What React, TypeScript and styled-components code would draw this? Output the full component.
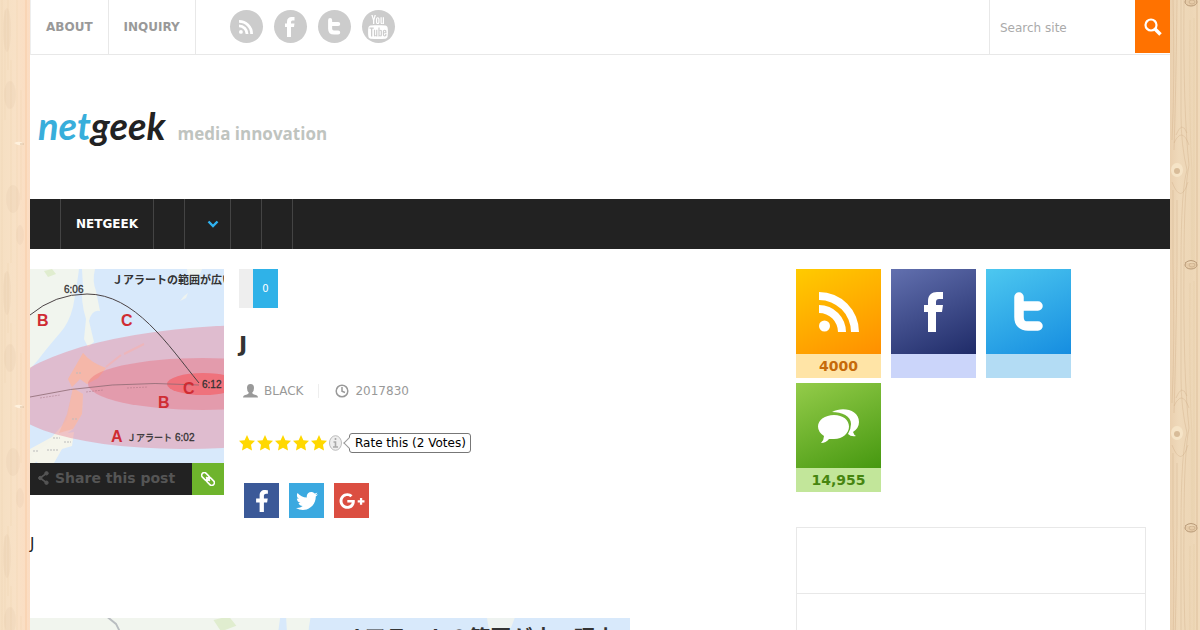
import React from "react";
import styled, { createGlobalStyle } from "styled-components";
import { FaFacebookF, FaGooglePlusG, FaTwitter } from "react-icons/fa";
import { TfiYoutube } from "react-icons/tfi";

const GlobalStyle = createGlobalStyle`
  *, *::before, *::after { box-sizing: border-box; }
  body {
    margin: 0;
    background: #fff;
    color: #222;
    font-family: "DejaVu Sans", "Noto Sans CJK JP", sans-serif;
    font-size: 12px;
  }
  a { color: inherit; text-decoration: none; }
  h1, p, ul { margin: 0; padding: 0; }
  svg { display: block; }
`;

const Shell = styled.div`
  display: grid;
  grid-template-columns: 30px minmax(0, 1fr) 30px;
  min-height: 100vh;
`;

const Page = styled.div`
  background: #fff;
  min-width: 0;
`;

const TopBar = styled.div`
  display: flex;
  height: 55px;
  border-bottom: 1px solid #e8e8e8;
  border-left: 1px solid #eee;
`;

const TopLink = styled.a`
  display: flex;
  align-items: center;
  padding: 0 15px;
  border-right: 1px solid #e8e8e8;
  color: #999;
  font-weight: bold;
`;

const Circles = styled.div`
  display: flex;
  gap: 11px;
  margin-left: 34px;
  padding-top: 10px;
`;

const Circle = styled.a`
  display: flex;
  align-items: center;
  justify-content: center;
  width: 33px;
  height: 33px;
  border-radius: 50%;
  background: #ccc;
  color: #fff;
`;

const Search = styled.form`
  display: flex;
  width: 181px;
  margin-left: auto;
  border-left: 1px solid #e8e8e8;
`;

const SearchInput = styled.input`
  flex: 1;
  min-width: 0;
  padding: 2px 10px 0;
  border: 0;
  outline: 0;
  background: transparent;
  font: 12px "DejaVu Sans", sans-serif;
  &::placeholder { color: #aaa; opacity: 1; }
`;

const SearchButton = styled.button`
  display: flex;
  align-items: center;
  justify-content: center;
  width: 35px;
  height: 53px;
  padding: 0;
  border: 0;
  background: #ff7200;
`;

const Header = styled.header`
  display: flex;
  align-items: baseline;
  gap: 12px;
  height: 144px;
  padding: 48px 0 0 8px;
`;

const Logo = styled.a`
  color: #222;
  font: italic bold 38px/44px Lato, sans-serif;
`;

const LogoAccent = styled.span`
  color: #38aedb;
`;

const Tagline = styled.span`
  color: #bfc4bf;
  font: bold 17px/24px "Open Sans", sans-serif;
`;

const Nav = styled.nav`
  display: flex;
  height: 50px;
  background: #222;
`;

const NavItem = styled.a<{ $menu?: boolean }>`
  display: flex;
  align-items: center;
  padding: 0 ${(p) => (p.$menu ? "11px 0 22px" : "15px")};
  border-right: 1px solid #444;
  color: #fff;
  font-weight: bold;
`;

const Columns = styled.div`
  display: flex;
  justify-content: space-between;
  padding: 20px 24px 0 0;
`;

const Article = styled.main`
  width: 600px;
`;

const Intro = styled.div`
  display: flex;
  gap: 15px;
`;

const ThumbBlock = styled.div`
  width: 194px;
`;

const ShareBar = styled.div`
  display: flex;
  height: 32px;
  background: #222;
`;

const ShareLabel = styled.span`
  display: flex;
  flex: 1;
  align-items: center;
  gap: 6px;
  padding: 0 0 2px 8px;
  color: #555;
  font-size: 14px;
  font-weight: bold;
`;

const ShareLink = styled.a`
  display: flex;
  align-items: center;
  justify-content: center;
  width: 32px;
  background: #6eb42c;
  color: #fff;
`;

const Details = styled.div`
  display: flex;
  flex-direction: column;
  align-items: flex-start;
`;

const Count = styled.span`
  width: 39px;
  border-left: 14px solid #eee;
  background: #2fb2e8;
  color: #fff;
  font-size: 10px;
  line-height: 39px;
  text-align: center;
`;

const Title = styled.h1`
  margin-top: 22px;
  color: #333;
  font-size: 22px;
  line-height: 30px;
`;

const Meta = styled.div`
  display: flex;
  align-items: center;
  height: 16px;
  margin-top: 23px;
  padding-left: 4px;
  color: #999;
`;

const MetaItem = styled.span`
  display: flex;
  align-items: center;
  gap: 6px;
  & + & {
    margin-left: 15px;
    padding-left: 16px;
    border-left: 1px solid #eee;
  }
`;

const Rating = styled.div`
  display: flex;
  align-items: center;
  height: 20px;
  margin-top: 34px;
`;

const Bubble = styled.span`
  position: relative;
  margin-left: 7px;
  padding: 0 4px 0 5px;
  border: 1px solid #777;
  border-radius: 3px;
  color: #000;
  line-height: 18px;
  &::before {
    content: "";
    position: absolute;
    top: 5px;
    left: -5px;
    width: 8px;
    height: 8px;
    border: solid #999;
    border-width: 0 0 1px 1px;
    background: #fff;
    transform: rotate(45deg);
  }
`;

const ShareButtons = styled.div`
  display: flex;
  gap: 10px;
  margin-top: 30px;
  padding-left: 5px;
`;

const ShareButton = styled.a<{ $color: string }>`
  display: flex;
  align-items: center;
  justify-content: center;
  width: 35px;
  height: 35px;
  background: ${(p) => p.$color};
  color: #fff;
`;

const Paragraph = styled.p`
  margin: 14px 0 62px;
  font-size: 15px;
  line-height: 24px;
`;

const Sidebar = styled.aside`
  width: 350px;
`;

const Tiles = styled.div`
  display: flex;
  flex-wrap: wrap;
  gap: 5px 10px;
`;

const Tile = styled.a<{ $from: string; $to: string }>`
  display: flex;
  align-items: center;
  justify-content: center;
  width: 85px;
  height: 85px;
  background: linear-gradient(155deg, ${(p) => p.$from}, ${(p) => p.$to});
`;

const TileCount = styled.div<{ $bg: string; $fg: string }>`
  height: 24px;
  background: ${(p) => p.$bg};
  color: ${(p) => p.$fg};
  font-size: 14px;
  font-weight: bold;
  line-height: 24px;
  text-align: center;
`;

const Widget = styled.section`
  margin-top: 35px;
  border: 1px solid #e8e8e8;
`;

const WidgetHead = styled.div`
  height: 66px;
  border-bottom: 1px solid #e8e8e8;
`;

const WidgetBody = styled.div`
  height: 200px;
`;

function LeftWood() {
  return (
    <svg width="30" height="100%" aria-hidden="true">
      <defs>
        <linearGradient id="lw">
          <stop offset="0" stopColor="#f5dfc2" />
          <stop offset=".5" stopColor="#f8e1c6" />
          <stop offset=".85" stopColor="#fbdec3" />
          <stop offset="1" stopColor="#fcdcc2" />
        </linearGradient>
        <pattern id="lp" width="30" height="263" patternUnits="userSpaceOnUse">
          <rect width="30" height="263" fill="url(#lw)" />
          <g fill="none" stroke="#e6c39c" strokeOpacity=".25">
            <path d="M2 0V263M5 10V120M8 0V70M11 60V263M17 0V263M21 90V200" />
            <path d="M26 0V263" stroke="#f3b98c" strokeOpacity=".5" />
          </g>
          <g fill="#cdb48f" fillOpacity=".13">
            <ellipse cx="7" cy="30" rx="4" ry="22" />
            <ellipse cx="13" cy="199" rx="7" ry="14" />
            <ellipse cx="20" cy="235" rx="4" ry="10" />
            <ellipse cx="10" cy="95" rx="6" ry="14" />
          </g>
          <path d="M14 143Q20 140 24 144Q20 147 14 143" fill="#fff1dd" />
          <path d="M20 144H24" stroke="#c39b73" strokeOpacity=".6" />
        </pattern>
      </defs>
      <rect width="30" height="100%" fill="url(#lp)" />
    </svg>
  );
}

function RightWood() {
  return (
    <svg width="30" height="100%" aria-hidden="true">
      <defs>
        <linearGradient id="rw">
          <stop offset="0" stopColor="#ead0af" />
          <stop offset=".3" stopColor="#efd9ba" />
          <stop offset=".7" stopColor="#edd6b6" />
          <stop offset="1" stopColor="#f1dabb" />
        </linearGradient>
        <pattern id="rp" width="30" height="263" patternUnits="userSpaceOnUse">
          <rect width="30" height="263" fill="url(#rw)" />
          <g fill="none" stroke="#c9a47b" strokeOpacity=".3">
            <path d="M3 0Q5 80 2 140M7 0Q6 90 4 150M11 0V115Q11 145 17 170Q11 190 11 263M14 0Q13 110 19 165Q14 190 14 263M3 190V263M7 200V263" />
            <path d="M20 20Q19 130 22 170V263M24 18V263" strokeOpacity=".15" />
            <path d="M27 0V263" stroke="#c09a70" strokeOpacity=".4" />
            <path d="M6 135Q12 120 17 133M4 143Q12 126 19 145M2 182Q11 205 18 182" />
          </g>
          <ellipse cx="7" cy="170" rx="6" ry="7" fill="#f7e7cb" fillOpacity=".8" />
          <ellipse cx="7" cy="171" rx="3" ry="3" fill="#c5a27a" fillOpacity=".6" />
          <g fill="#e6cba8" stroke="#b89976">
            <ellipse cx="21" cy="2" rx="6" ry="4" />
            <ellipse cx="22" cy="2" rx="3" ry="2" strokeOpacity=".5" />
            <path d="M15 263Q21 258 27 263" fill="none" />
          </g>
        </pattern>
      </defs>
      <rect width="30" height="100%" fill="url(#rp)" />
    </svg>
  );
}

function AlertMap({ width, height, viewBox }: { width: number; height: number; viewBox: string }) {
  return (
    <svg width={width} height={height} viewBox={viewBox} role="img" aria-label="Jアラートの範囲">
      <rect x="-90" width="340" height="194" fill="#d8e9fb" />
      <path d="M-90 0H49Q47 16 43 38Q39 54 30 64Q17 79 8 91L0 100L-90 130Z" fill="#f1f5ee" />
      <path d="M-42 0L-37 4L-33 12" fill="none" stroke="#b9bdc0" />
      <path d="M14 2L22 0L26 5L18 8Z" fill="#e0edcf" />
      <path d="M52 0H65Q62 12 66 22L70 42Q62 40 59 52L64 73L58 78L54 70L56 50Q50 30 53 18Z" fill="#f1f5ee" />
      <path d="M157 0H172L169 8L165 12L158 6ZM150 32L154 27L158 24L156 29Z" fill="#eef3f0" />
      <path d="M45 98L53 84Q61 94 76 99L68 109L57 115L50 110L42 118L38 110Z" fill="#f6e6d2" />
      <path d="M43 119L53 125L52 145L43 160L34 167L24 175L13 182L5 194H-6L0 180L22 168L37 151Z" fill="#f4f4ea" />
      <path d="M27 166L44 163L42 177L32 180L24 194H8L0 188L14 177Z" fill="#f5f5eb" />
      <path d="M76 98L91 86M94 85L114 75" stroke="#f1dcd8" strokeWidth="2" />
      <ellipse cx="190" cy="118" rx="215" ry="61" fill="#e88295" fillOpacity=".43" transform="rotate(-3 190 118)" />
      <path d="M45 98L53 84Q61 94 76 99L68 109L57 115L50 110L42 118L38 110ZM43 119L53 125L52 145L43 160L29 164L37 145Z" fill="#f6b5a2" fillOpacity=".7" />
      <ellipse cx="173" cy="115" rx="115" ry="26" fill="#eb6270" fillOpacity=".36" />
      <ellipse cx="173" cy="115" rx="36" ry="11" fill="#ff3a3a" fillOpacity=".42" />
      <path d="M-70 150L0 128Q80 110 169 116" fill="none" stroke="#8d6972" strokeWidth=".8" />
      <path d="M-70 140Q-35 76 0 46Q25 25 57 25C105 25 138 76 169 114" fill="none" stroke="#4b4345" />
      <path d="M10 129L30 126M56 123L73 121M97 119L118 118" stroke="#9b6875" strokeOpacity=".4" strokeDasharray="2 1" />
      <path d="M46 104h5M42 150h5M23 169h7M34 173h7M3 182h6M17 181h11" stroke="#bbb" strokeDasharray="2 1" />
      <g fontFamily="Liberation Sans, Noto Sans CJK JP, sans-serif" fill="#333">
        <text x="82" y="15" fontSize="11" fontWeight="bold" fontFamily="Noto Sans CJK JP, sans-serif">Ｊアラートの範囲が広い理由</text>
        <g fontSize="10" stroke="#333" strokeWidth=".3">
          <text x="34" y="24">6:06</text>
          <text x="172" y="119">6:12</text>
          <text x="145" y="172">6:02</text>
          <text x="97" y="172" fontSize="9">Ｊアラート</text>
        </g>
        <g fontSize="16" fontWeight="bold" fill="#cf2c33">
          <text x="7" y="57">B</text>
          <text x="91" y="57">C</text>
          <text x="153" y="125">C</text>
          <text x="128" y="139">B</text>
          <text x="81" y="173">A</text>
        </g>
      </g>
    </svg>
  );
}

function RssMark({ size }: { size: number }) {
  return (
    <svg width={size} height={size} viewBox="0 0 40 40" fill="#fff" aria-hidden="true">
      <circle cx="5.5" cy="34" r="5.5" />
      <path d="M0 13A27 27 0 0 1 27 40H19A19 19 0 0 0 0 21Z" />
      <path d="M0 0A40 40 0 0 1 40 40H32A32 32 0 0 0 0 8Z" />
    </svg>
  );
}

function FacebookMark({ size }: { size: number }) {
  return (
    <svg width={size / 2} height={size} viewBox="0 0 20 40" fill="#fff" aria-hidden="true">
      <path d="M4 40V20H0V13H4V9C4 3 8 0 13 0H19V7H15Q12 7 12 10V13H19L18 20H12V40Z" />
    </svg>
  );
}

function LetterBird({ size }: { size: number }) {
  return (
    <svg width={size * 0.75} height={size} viewBox="0 0 30 40" aria-hidden="true">
      <path d="M5 5V25Q5 34 14 34H24M5 14H24" fill="none" stroke="#fff" strokeWidth="9.5" strokeLinecap="round" strokeLinejoin="round" />
    </svg>
  );
}

function CommentsMark() {
  return (
    <svg width="42" height="36" viewBox="0 0 42 36" fill="#fff" aria-hidden="true">
      <path d="M14 4C25-2 41 2 41 14Q41 20 35 24Q36 27 38 28Q33 29 30 26Q33 21 33 16C33 8 24 4 14 4Z" />
      <path d="M16 7C25 7 31 12 31 18.500C31 25 25 31 16 31L11 31Q8 35 3 35Q6 32 6 28Q0 24 0 18.500C0 12 7 7 16 7Z" />
    </svg>
  );
}

function Star() {
  return (
    <svg width="18" height="18" viewBox="0 0 18 18" aria-hidden="true">
      <path d="M8 1L10.400 6.200L16 6.800L12 10.700L13 16.500L8 13.700L3 16.500L4 10.700L0 6.800L5.600 6.200Z" fill="#ffd800" />
    </svg>
  );
}

const tiles = [
  { name: "RSS", count: "4000", from: "#ffcb00", to: "#ff8f00", bg: "#ffe4a6", fg: "#c66a0a", icon: <RssMark size={40} /> },
  { name: "Facebook", count: "", from: "#6270af", to: "#1f2b68", bg: "#cbd5fa", fg: "#26387c", icon: <FacebookMark size={40} /> },
  { name: "Twitter", count: "", from: "#4dc8f0", to: "#168de0", bg: "#b3dcf4", fg: "#1672b5", icon: <LetterBird size={40} /> },
  { name: "Comments", count: "14,955", from: "#94cc4a", to: "#469810", bg: "#c2e69a", fg: "#468510", icon: <CommentsMark /> },
];

export default function App() {
  return (
    <>
      <GlobalStyle />
      <Shell>
        <LeftWood />
        <Page>
          <TopBar>
            <TopLink href="#about">ABOUT</TopLink>
            <TopLink href="#inquiry">INQUIRY</TopLink>
            <Circles>
              <Circle href="#rss" aria-label="RSS"><RssMark size={14} /></Circle>
              <Circle href="#facebook" aria-label="Facebook"><FacebookMark size={20} /></Circle>
              <Circle href="#twitter" aria-label="Twitter"><LetterBird size={17} /></Circle>
              <Circle href="#youtube" aria-label="YouTube"><TfiYoutube size={24} /></Circle>
            </Circles>
            <Search onSubmit={(e) => e.preventDefault()}>
              <SearchInput type="text" placeholder="Search site" aria-label="Search site" />
              <SearchButton type="submit" aria-label="Search">
                <svg width="18" height="18" viewBox="0 0 18 18" fill="none" stroke="#fff" aria-hidden="true">
                  <circle cx="7" cy="7" r="5.500" strokeWidth="2.200" />
                  <path d="M11 11L16.500 16.500" strokeWidth="3.500" />
                </svg>
              </SearchButton>
            </Search>
          </TopBar>

          <Header>
            <Logo href="#home"><LogoAccent>net</LogoAccent>geek</Logo>
            <Tagline>media innovation</Tagline>
          </Header>

          <Nav>
            <NavItem href="#home" aria-label="Home" />
            <NavItem href="#netgeek">NETGEEK</NavItem>
            <NavItem href="#news" aria-label="News" />
            <NavItem href="#more" aria-label="More" $menu>
              <svg width="12" height="8" viewBox="0 0 12 8" fill="none" stroke="#2fb2f0" strokeWidth="2.400" aria-hidden="true">
                <path d="M1.500 1.500L6 6L10.500 1.500" />
              </svg>
            </NavItem>
            <NavItem href="#topics" aria-label="Topics" />
            <NavItem href="#contact" aria-label="Contact" />
          </Nav>

          <Columns>
            <Article>
              <Intro>
                <ThumbBlock>
                  <AlertMap width={194} height={194} viewBox="0 0 194 194" />
                  <ShareBar>
                    <ShareLabel>
                      <svg width="11" height="14" viewBox="0 0 11 14" fill="#555" stroke="#555" aria-hidden="true">
                        <path d="M9 2L2 7L9 12" fill="none" strokeWidth="1.600" />
                        <circle cx="8.500" cy="2.300" r="1.700" />
                        <circle cx="2.300" cy="7" r="1.700" />
                        <circle cx="8.500" cy="11.700" r="1.700" />
                      </svg>
                      Share this post
                    </ShareLabel>
                    <ShareLink href="#link" aria-label="Copy link">
                      <svg width="14" height="14" viewBox="0 0 16 16" fill="none" stroke="#fff" strokeWidth="1.800" aria-hidden="true">
                        <g transform="rotate(45 8 8)">
                          <rect x="-1" y="5" width="10" height="6" rx="3" />
                          <rect x="7" y="5" width="10" height="6" rx="3" />
                          <path d="M5 8H11" />
                        </g>
                      </svg>
                    </ShareLink>
                  </ShareBar>
                </ThumbBlock>
                <Details>
                  <Count>0</Count>
                  <Title>J</Title>
                  <Meta>
                    <MetaItem>
                      <svg width="15" height="14" viewBox="0 0 15 14" fill="#999" aria-hidden="true">
                        <path d="M7.500 0Q11 0 11 4Q11 7 9.300 8.500Q9 10 11 10.400Q15 11 15 13.500H0Q0 11 4 10.400Q6 10 5.700 8.500Q4 7 4 4Q4 0 7.500 0Z" />
                      </svg>
                      BLACK
                    </MetaItem>
                    <MetaItem>
                      <svg width="14" height="14" viewBox="0 0 14 14" fill="none" stroke="#999" strokeWidth="1.500" aria-hidden="true">
                        <circle cx="7" cy="7" r="5.800" />
                        <path d="M7 3V7.300L10 8.500" />
                      </svg>
                      2017830
                    </MetaItem>
                  </Meta>
                  <Rating>
                    {[1, 2, 3, 4, 5].map((n) => <Star key={n} />)}
                    <svg width="13" height="16" viewBox="0 0 13 16" aria-hidden="true">
                      <ellipse cx="6.500" cy="8" rx="6" ry="7.300" fill="#eee" stroke="#bbb" />
                      <path d="M6.500 3V5M4.500 7H6.500V12M4 12H9" fill="none" stroke="#aaa" strokeWidth="1.600" />
                    </svg>
                    <Bubble>Rate this (2 Votes)</Bubble>
                  </Rating>
                  <ShareButtons>
                    <ShareButton href="#facebook" aria-label="Facebook" $color="#3b5998"><FaFacebookF size={22} /></ShareButton>
                    <ShareButton href="#twitter" aria-label="Twitter" $color="#3ba9e0"><FaTwitter size={22} /></ShareButton>
                    <ShareButton href="#google" aria-label="Google Plus" $color="#db4e41"><FaGooglePlusG size={26} /></ShareButton>
                  </ShareButtons>
                </Details>
              </Intro>
              <Paragraph>J</Paragraph>
              <AlertMap width={600} height={371} viewBox="-82 1 314 194" />
            </Article>

            <Sidebar>
              <Tiles>
                {tiles.map((t) => (
                  <div key={t.name}>
                    <Tile href={"#" + t.name} aria-label={t.name} $from={t.from} $to={t.to}>{t.icon}</Tile>
                    <TileCount $bg={t.bg} $fg={t.fg}>{t.count}</TileCount>
                  </div>
                ))}
              </Tiles>
              <Widget>
                <WidgetHead />
                <WidgetBody />
              </Widget>
            </Sidebar>
          </Columns>
        </Page>
        <RightWood />
      </Shell>
    </>
  );
}
